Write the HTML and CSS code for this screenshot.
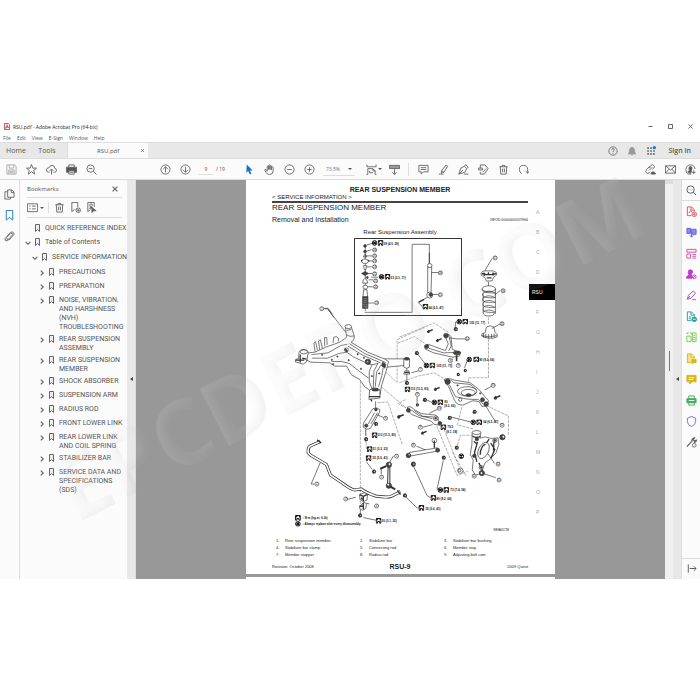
FILE: index.html
```
<!DOCTYPE html>
<html lang="en">
<head>
<meta charset="utf-8">
<title>RSU.pdf - Adobe Acrobat Pro (64-bit)</title>
<link rel="stylesheet" href="styles.css">
</head>
<body>
<svg class="defs" aria-hidden="true">
  <defs>
    <symbol id="bm" viewBox="0 0 10 16"><path d="M1 1h8v14L5 11 1 15z"/></symbol>
    <symbol id="right" viewBox="0 0 10 10"><path d="M3 1l4 4-4 4"/></symbol>
    <symbol id="down" viewBox="0 0 10 10"><path d="M1 3l4 4 4-4"/></symbol>
    <symbol id="x" viewBox="0 0 10 10"><path d="M1 1l8 8M9 1L1 9"/></symbol>
    <symbol id="trash" viewBox="0 0 24 24"><path d="M3 6h18M9 6V3h6v3M5 6l1 16h12l1-16M10 10v8M14 10v8"/></symbol>
    <symbol id="t" viewBox="0 0 18 18"><path d="M2 16V2h14v14h-4v-5H6v5z" fill="#fff" stroke="#111" stroke-width="3"/><path d="M2 2h5v5H2zM12 2h4v5h-4z" fill="#111"/></symbol>
    <symbol id="r" viewBox="0 0 18 18"><circle cx="9" cy="9" r="7" fill="#fff" stroke="#111" stroke-width="3"/><path d="M5 5l8 8M13 5l-8 8" stroke="#111" stroke-width="4"/></symbol>
    <symbol id="nut" viewBox="0 0 14 14"><path d="M3 2l6-1 4 5-2 6-7 1-3-5z" fill="#333"/><circle cx="8" cy="7" r="2" fill="#bbb"/></symbol>
    <symbol id="bolt" viewBox="0 0 20 14"><path d="M1 8l5-5 4 3-1 6-5 1z" fill="#333"/><path d="M8 7l10-4" stroke="#333" stroke-width="4"/></symbol>
    <filter id="emboss" x="-5%" y="-20%" width="110%" height="140%">
      <feGaussianBlur in="SourceAlpha" stdDeviation="4" result="b"/>
      <feOffset in="b" dx="-5" dy="-3" result="lo"/>
      <feComposite in="SourceAlpha" in2="lo" operator="out" result="lo2"/>
      <feColorMatrix in="lo2" values="0 0 0 0 0  0 0 0 0 0  0 0 0 0 0  0 0 0 .07 0" result="shade"/>
      <feOffset in="b" dx="5" dy="3" result="hi"/>
      <feComposite in="SourceAlpha" in2="hi" operator="out" result="hi2"/>
      <feColorMatrix in="hi2" values="0 0 0 0 1  0 0 0 0 1  0 0 0 0 1  0 0 0 .08 0" result="light"/>
      <feColorMatrix in="SourceAlpha" values="0 0 0 0 .65  0 0 0 0 .65  0 0 0 0 .65  0 0 0 .06 0" result="base"/>
      <feMerge><feMergeNode in="base"/><feMergeNode in="light"/><feMergeNode in="shade"/></feMerge>
    </filter>
  </defs>
</svg>
<div class="app">
  <header class="titlebar">
    <svg class="pdf" viewBox="0 0 14 16"><path d="M1 1h9l3 3v11H1z" fill="#fff" stroke="#c33" stroke-width="2"/><path d="M3 12c3-2 4-5 4-8 0 4 2 6 4 6-3-1-6 0-8 2" stroke="#c33" fill="none" stroke-width="2"/></svg>
    <h1>RSU.pdf - Adobe Acrobat Pro (64-bit)</h1>
    <div class="winbtns">
      <button aria-label="Minimize"><svg viewBox="0 0 10 10"><path d="M1 5h8"/></svg></button>
      <button aria-label="Maximize"><svg viewBox="0 0 10 10"><path d="M1 1h8v8H1z"/></svg></button>
      <button aria-label="Close"><svg viewBox="0 0 10 10"><use href="#x"/></svg></button>
    </div>
  </header>
  <nav class="menubar"><button>File</button><button>Edit</button><button>View</button><button>E-Sign</button><button>Window</button><button>Help</button></nav>
  <div class="tabs">
    <button class="home">Home</button><button class="tools">Tools</button>
    <div class="tab"><span>RSU.pdf</span><button aria-label="Close tab"><svg viewBox="0 0 10 10"><use href="#x"/></svg></button></div>
    <div class="account">
      <button aria-label="Help"><svg viewBox="0 0 24 24"><circle cx="12" cy="12" r="10"/><path d="M9 9q0-3 3-3t3 3q0 2-3 4v2M12 17v2"/></svg></button>
      <button aria-label="Notifications"><svg viewBox="0 0 24 24"><path d="M3 19q3-3 3-9 0-6 6-7 6 1 6 7 0 6 3 9zM9 21h6" fill="#999" stroke="#999"/></svg></button>
      <button aria-label="Apps"><svg viewBox="0 0 24 24"><path d="M3 5h4M10 5h4M3 12h4M10 12h4M17 12h4M3 19h4M10 19h4M17 19h4" stroke-width="4"/><circle cx="20" cy="4" r="4" fill="#1877e0" stroke="none"/></svg></button>
      <button class="signin">Sign In</button>
    </div>
  </div>
  <div class="toolbar">
    <div class="group g-file">
      <button aria-label="Save"><svg class="dim" viewBox="0 0 24 24"><path d="M2 2h17l3 3v17H2zM7 2v7h10V2M6 22v-9h12v9M8 16h8M8 19h8"/></svg></button>
      <button aria-label="Star"><svg viewBox="0 0 24 24"><path d="M12 1l3 8h8l-6 5 2 8-7-5-7 5 2-8-6-5h8z"/></svg></button>
      <button aria-label="Upload"><svg viewBox="0 0 24 24"><path d="M8 18H6q-5 0-5-5t6-5q1-5 6-5 6 0 6 6 4 1 4 5t-5 4h-2M12 23V11M8 15l4-4 4 4"/></svg></button>
      <button aria-label="Print"><svg viewBox="0 0 24 24"><path d="M6 7V2h12v5M6 15h12v7H6z"/><path d="M1 7h22v11h-5v-4H6v4H1z" fill="#555"/><path d="M8 18h8"/></svg></button>
      <button aria-label="Find"><svg viewBox="0 0 24 24"><circle cx="10" cy="10" r="8"/><path d="M16 16l7 7M6 10h8"/></svg></button>
    </div>
    <div class="group g-nav">
      <button aria-label="Previous page"><svg viewBox="0 0 24 24"><circle cx="12" cy="12" r="10"/><path d="M12 18V6M7 11l5-5 5 5"/></svg></button>
      <button aria-label="Next page"><svg viewBox="0 0 24 24"><circle cx="12" cy="12" r="10"/><path d="M12 6v12M7 13l5 5 5-5"/></svg></button>
      <input class="pageno" aria-label="Page" value="9"><span class="total">/ 19</span>
    </div>
    <div class="group g-view">
      <button aria-label="Select"><svg viewBox="0 0 24 24"><path d="M6 1l13 13h-6l3 7-3 2-4-8-4 4z" fill="#1473c8" stroke="none"/></svg></button>
      <button aria-label="Pan"><svg viewBox="0 0 24 24"><path d="M7 16V5q2-2 3 0v7V3q2-2 3 0v9V4q2-2 3 0v9V7q2-2 4 0v8q0 8-8 8-5 0-7-4l-4-6q1-2 3-1l3 4"/></svg></button>
      <button aria-label="Zoom out"><svg viewBox="0 0 24 24"><circle cx="12" cy="12" r="10"/><path d="M7 12h10"/></svg></button>
      <button aria-label="Zoom in"><svg viewBox="0 0 24 24"><circle cx="12" cy="12" r="10"/><path d="M7 12h10M12 7v10"/></svg></button>
      <div class="zoom"><select aria-label="Zoom level"><option>73,5%</option></select><i class="caret"></i></div>
      <button class="fit" aria-label="Fit"><svg viewBox="0 0 24 24"><path d="M2 1v5h20V1M4 23V10h11l5 5v8M15 10v5h5M1 23h3M20 23h3M8 15v4h7"/></svg><i class="caret"></i></button>
      <button aria-label="Scroll"><svg viewBox="0 0 24 24"><path d="M1 3h22v7H1z" fill="#999"/><path d="M12 10v13M7 18l5 5 5-5"/></svg></button>
    </div>
    <div class="group g-edit">
      <button aria-label="Comment"><svg viewBox="0 0 24 24"><path d="M2 3h20v14H12l-5 5v-5H2zM6 8h12M6 12h12"/></svg></button>
      <button aria-label="Highlight"><svg viewBox="0 0 24 24"><path d="M18 2l3 3-8 13-6 2 1-6zM8 14l5 4M2 22h10"/></svg></button>
      <button aria-label="Sign"><svg viewBox="0 0 24 24"><path d="M2 22L6 9l8-4 5 5-4 8zM2 22l9-9M14 5l3-4 5 6-3 3M13 22h10"/></svg></button>
      <button aria-label="Stamp"><svg viewBox="0 0 24 24"><path d="M5 9V2h10l7 8-8 12H5v-5M1 9h9v4H1zM10 18l8-8"/></svg></button>
      <button aria-label="Delete"><svg viewBox="0 0 24 24"><use href="#trash"/></svg></button>
      <button aria-label="Rotate"><svg viewBox="0 0 24 24"><path d="M8 21Q3 18 3 12q0-9 9-9t9 9v8M17 16l4 4 3-4"/></svg></button>
    </div>
    <div class="group g-share">
      <button aria-label="Link"><svg viewBox="0 0 24 24"><path d="M9 14l7-7M8 9l5-6q3-3 6 0t0 6l-3 3M12 8L9 6 3 13q-3 3 0 6t6 0l2-2"/><path d="M13 22q0-4 4-5 5 0 6 5z" fill="#555"/></svg></button>
      <button aria-label="Mail"><svg viewBox="0 0 24 24"><path d="M1 4h22v16H1zM1 4l11 9L23 4M1 20l8-9M23 20l-8-9"/></svg></button>
      <button aria-label="Add person"><svg viewBox="0 0 24 24"><path d="M14 22Q2 24 2 12 3 2 12 2t10 9M19 14v8M15 18h8"/><path d="M9 7q3-3 6 0 1 4-1 7v3l-2 3q-4 0-6-3l4-3q-2-3-1-7" fill="#555"/></svg></button>
    </div>
  </div>
  <div class="body">
    <nav class="rail">
      <button aria-label="Page thumbnails"><svg viewBox="0 0 24 24"><path d="M8 2h9l5 5v11H8zM16 2v6h6M8 6H2v16h12v-4"/></svg></button>
      <button class="on" aria-label="Bookmarks"><svg viewBox="0 0 24 24"><path d="M5 1h14v21l-7-6-7 6z"/></svg></button>
      <button aria-label="Attachments"><svg viewBox="0 0 24 24"><path d="M6 14l9-9q4-1 4 3l-9 10q-5 2-4-3M10 18l-2 3q-6 2-6-4L14 3q7-3 8 4L11 20"/></svg></button>
    </nav>
    <aside class="panel">
      <div class="phead"><h2>Bookmarks</h2><button aria-label="Close panel"><svg viewBox="0 0 10 10"><use href="#x"/></svg></button></div>
      <div class="ptools">
        <button class="opts" aria-label="Options"><svg viewBox="0 0 24 24"><path d="M1 4h22v17H1zM5 9h3M5 15h3M11 9h8M11 15h8"/></svg><i class="caret"></i></button>
        <button aria-label="Delete bookmark"><svg viewBox="0 0 24 24"><use href="#trash"/></svg></button>
        <button aria-label="New bookmark"><svg viewBox="0 0 24 24"><path d="M10 16l-6 5V1h13v10"/><circle cx="18" cy="18" r="5"/><path d="M18 15v6M15 18h6"/></svg></button>
        <button aria-label="Find bookmark"><svg viewBox="0 0 24 24"><path d="M10 16l-6 5V1h14v10"/><circle cx="11" cy="7" r="3"/><path d="M7 14q4-5 8 0M13 12l9 7h-5l-4 4z" fill="#555"/></svg></button>
      </div>
      <ul class="tree">
        <li><div class="row"><i class="tw"></i><svg class="b"><use href="#bm"/></svg><a href="#p">QUICK REFERENCE INDEX</a></div></li>
        <li><div class="row"><svg class="tw"><use href="#down"/></svg><svg class="b"><use href="#bm"/></svg><a href="#p">Table of Contents</a></div>
          <ul>
            <li><div class="row"><svg class="tw"><use href="#down"/></svg><svg class="b"><use href="#bm"/></svg><a href="#p">SERVICE INFORMATION</a></div>
              <ul>
                <li><div class="row"><svg class="tw"><use href="#right"/></svg><svg class="b"><use href="#bm"/></svg><a href="#p">PRECAUTIONS</a></div></li>
                <li><div class="row"><svg class="tw"><use href="#right"/></svg><svg class="b"><use href="#bm"/></svg><a href="#p">PREPARATION</a></div></li>
                <li><div class="row"><svg class="tw"><use href="#right"/></svg><svg class="b"><use href="#bm"/></svg><a href="#p">NOISE, VIBRATION,<br>AND HARSHNESS<br>(NVH)<br>TROUBLESHOOTING</a></div></li>
                <li><div class="row"><svg class="tw"><use href="#right"/></svg><svg class="b"><use href="#bm"/></svg><a href="#p">REAR SUSPENSION<br>ASSEMBLY</a></div></li>
                <li><div class="row"><svg class="tw"><use href="#right"/></svg><svg class="b"><use href="#bm"/></svg><a href="#p">REAR SUSPENSION<br>MEMBER</a></div></li>
                <li><div class="row"><svg class="tw"><use href="#right"/></svg><svg class="b"><use href="#bm"/></svg><a href="#p">SHOCK ABSORBER</a></div></li>
                <li><div class="row"><svg class="tw"><use href="#right"/></svg><svg class="b"><use href="#bm"/></svg><a href="#p">SUSPENSION ARM</a></div></li>
                <li><div class="row"><svg class="tw"><use href="#right"/></svg><svg class="b"><use href="#bm"/></svg><a href="#p">RADIUS ROD</a></div></li>
                <li><div class="row"><svg class="tw"><use href="#right"/></svg><svg class="b"><use href="#bm"/></svg><a href="#p">FRONT LOWER LINK</a></div></li>
                <li><div class="row"><svg class="tw"><use href="#right"/></svg><svg class="b"><use href="#bm"/></svg><a href="#p">REAR LOWER LINK<br>AND COIL SPRING</a></div></li>
                <li><div class="row"><svg class="tw"><use href="#right"/></svg><svg class="b"><use href="#bm"/></svg><a href="#p">STABILIZER BAR</a></div></li>
                <li><div class="row"><svg class="tw"><use href="#right"/></svg><svg class="b"><use href="#bm"/></svg><a href="#p">SERVICE DATA AND<br>SPECIFICATIONS<br>(SDS)</a></div></li>
              </ul>
            </li>
          </ul>
        </li>
      </ul>
    </aside>
    <button class="collapse" aria-label="Collapse left panel"><i></i></button>
    <main class="doc">
      <article class="paper" id="p">
        <div class="content">
          <h2 class="running">REAR SUSPENSION MEMBER</h2>
          <p class="service">&lt; SERVICE INFORMATION &gt;</p>
          <h3>REAR SUSPENSION MEMBER</h3>
          <div class="sub"><h4>Removal and Installation</h4><span>INFOID:0000000001679964</span></div>
          <p class="caption">Rear Suspension Assembly</p>
          <svg class="diagram" viewBox="272 237 257 299" role="img" aria-label="Rear suspension exploded view">
            <rect x="355" y="239" width="107" height="77" fill="none" stroke="#333" stroke-width="1" shape-rendering="crispEdges"/>
            <!-- strut mount stack -->
            <g transform="translate(245 178) scale(.3333)" class="ln">
              <path d="M362 200V400M361 203l22-7M361 221l20-6M361 234h22M368 249h16M362 267h20M372 287h12M372 306h14M368 327h18M370 376h20M380 298l20 0M360 404h143V200M250 394l18 26M236 392h14l12 16"/>
              <circle cx="361" cy="204" r="4" class="k"/><circle cx="361" cy="221" r="4" class="k"/><path d="M356 237l5-8 6 8z"/>
              <ellipse cx="361" cy="250" rx="10" ry="7" class="w"/><path d="M352 246l-2 5M371 246l2 5" stroke-width="4"/>
              <path d="M357 263h9l-2 12h-5z" class="w"/><path d="M351 287l10-6 11 6-11 6z" class="k"/>
              <path d="M354 316q0-13 7-14 8 2 8 14z" class="w"/><ellipse cx="362" cy="328" rx="7" ry="6" class="w"/><path d="M357 336h10l2 22h-14z" class="w"/>
              <path d="M354 357h16v35h-16z" class="k"/><path d="M356 363h12M356 369h12M356 375h12M356 381h12M356 387h12" stroke="#999"/>
              <circle cx="368" cy="299" r="3" class="k"/>
            </g>
            <!-- shock absorber, coil spring -->
            <g transform="translate(400 178) scale(.3333)" class="ln">
              <path d="M38 199h52v60"/><path d="M90 226v32" stroke-width="4" stroke-dasharray="4 2"/>
              <path d="M85 267h12l-2 78h-10z" class="w"/><ellipse cx="91" cy="263" rx="7" ry="6" class="w"/><circle cx="91" cy="352" r="9" class="w"/><circle cx="94" cy="351" r="5" class="k"/>
              <path d="M97 284h20M100 350h17M84 359l-26 14M56 374l14 14"/><path d="M58 373l16-8" stroke-width="4"/>
              <path d="M246 292q-3-11 12-13h24q14 4 11 12l-10 8-4 10-17 1-5-11z" class="w"/><path d="M248 287q22 7 43 0M254 284l2 10M268 283v9M281 284l2 9M263 300h14" stroke-width="4"/>
              <path d="M268 312v12M279 241l-22 38M304 338l-18 14"/>
              <ellipse cx="269" cy="333" rx="20" ry="9"/><path d="M249 333q-3 11 20 12t20 1M250 348q-3 12 19 12t20 0M251 362q-3 12 18 12t19 0M251 377q-3 11 18 12t18 0M252 392q-3 11 17 12t17 0M252 405q1 10 17 10t17-10M289 333v75M252 346v60M252 346q16-12 37 0M252 360q16-12 37 0M252 374q16-12 37 0M252 389q16-12 36 0M252 403q16-12 36 0"/>
            </g>
            <!-- subframe and front brace -->
            <g transform="translate(285 300) scale(.3333)" class="ln">
              <path d="M118 27h10l56 72"/>
              <path d="M227 150V630M300 215l38 34V120l82-36M290 262l75 64-25-13 25-13M340 131l50-20 30 20M279 310l31-2 44 130" class="dash"/>
              <path d="M295 178L360 178V198L306 203z" class="w"/>
              <path d="M120 140l-1-26h7l1 22M91 158l-4-28 5-4 6 26M105 152l-4-28 6-3 6 26M145 130l2-17q8-5 14 3v10" class="w"/>
              <path d="M68 160L90 158 125 142 165 128 186 113 182 84Q190 74 200 82L209 110Q211 122 199 128L249 158 299 178 312 186 305 214 290 262 287 286 257 284 255 272 240 262 225 240 200 226 186 200 150 200 135 190 78 188 66 182z" class="w"/>
              <path d="M42 160q2-11 17-10 12 2 11 11l-6 27q-8 10-20 3l-13-4 2-8 8-1z" class="w"/><ellipse cx="57" cy="157" rx="11" ry="6" class="w"/><path d="M46 165v24M52 176l12 3M32 182h26" stroke-width="4"/>
              <ellipse cx="191" cy="81" rx="10" ry="6" class="w"/><path d="M186 92l14-2M186 106q10 7 22 3"/>
              <path d="M80 165L130 160 168 138 188 134M194 132L240 162 292 184 304 190M190 140L236 168 288 190M82 176L128 176 162 162 186 158 206 172 244 190 262 196 280 192"/>
              <path d="M140 186L170 186 194 192 222 214 252 236M262 196L254 216 254 246 262 268M280 192L268 214 266 268M290 196L276 218 272 262M296 204l-4 24-10 34"/>
              <path d="M180 147l8 9M243 181l12 12" stroke-width="6"/><circle cx="185" cy="151" r="6"/><circle cx="250" cy="187" r="8" class="k"/><circle cx="249" cy="187" r="3" fill="#fff"/>
              <g class="k"><circle cx="141" cy="181" r="2"/><circle cx="158" cy="171" r="2"/><circle cx="192" cy="182" r="2"/><circle cx="229" cy="208" r="2"/><circle cx="219" cy="164" r="2"/><circle cx="238" cy="175" r="2"/><circle cx="145" cy="194" r="2"/><circle cx="112" cy="166" r="2"/><circle cx="284" cy="222" r="2"/><circle cx="262" cy="230" r="2"/></g>
              <path d="M358 178q8-8 17 0v25q-9 7-17 0z" class="w"/><ellipse cx="367" cy="178" rx="8" ry="4" class="k"/><path d="M294 188l10 6-3 12-10-7z" class="k"/>
              <path d="M255 272q15-13 31 0v24l-33 4z" class="w"/><ellipse cx="272" cy="271" rx="11" ry="4" class="k"/><path d="M253 292h34M258 299l4 7" stroke-width="4"/>
              <path d="M367 206v44"/><path d="M358 224h18l-3-10h-12z" class="w"/><path d="M360 219h15" stroke-width="4"/>
              <path d="M273 306v22M243 390v20"/>
              <path d="M265 328q12-6 21 3l-2 10-27 47q-11 6-21-4v-12z" class="w"/><path d="M270 340l-19 34M279 340l-20 34"/><circle cx="274" cy="331" r="4" class="k"/><circle cx="245" cy="379" r="5" class="k"/><path d="M276 346l24 10"/>
            </g>
            <!-- upper arm, lower arm, links -->
            <g transform="translate(400 310) scale(.3333)" class="ln">
              <path d="M268 23v20M268 88v117h-60v40" class="dash"/>
              <path d="M247 79q-2-8 11-10l4-17q12-7 22 0l4 17q10 4 6 13-22 10-47-3z" class="w"/><path d="M249 78q20 8 44 0M253 72v12M260 73v12M268 74v12M277 73v12M285 72v12"/>
              <path d="M0 82l105-42 42 28M0 220l55-20 50-10 40 25M252 284l76 36v60M188 293l-14 54 48 12M167 120l-13 55" class="dash"/>
              <path d="M76 108l10-4 52 19 9-20-9-22q7-14 17 0l4 38q14 9 24 8l-2 12-20 4-36-8-22-5-26-12z" class="w"/><circle cx="82" cy="111" r="6" class="k"/><circle cx="140" cy="78" r="7" class="k"/><ellipse cx="173" cy="130" rx="11" ry="6" class="k"/><path d="M172 137v18" stroke-width="5"/><path d="M88 116l45 14 28-1M148 77l8 32-8 15"/>
              <path d="M134 211q8-8 31 1l48 8 25 19 30 35-6 16-14 1-8-14-19-3-29 13q-20 1-26-14l-18-41z" class="w"/><ellipse cx="204" cy="246" rx="29" ry="14" class="w"/><ellipse cx="207" cy="250" rx="21" ry="10"/><ellipse cx="208" cy="257" rx="8" ry="4" class="k"/><circle cx="145" cy="217" r="8" class="k"/><path d="M155 212l8 8 50 5 20 17M150 226l19 36 33 7 36 2 15 14"/><circle cx="250" cy="271" r="6" class="k"/><circle cx="261" cy="284" r="7" class="k"/><circle cx="262" cy="283" r="2" fill="#fff"/><circle cx="183" cy="271" r="5"/><circle cx="243" cy="252" r="2" class="k"/><circle cx="175" cy="228" r="2" class="k"/>
              <path d="M24 293q10-5 21 8l21 12 40 4q15 5 10 18l12 5-6 8-18-3-8-9-38-12-22-9-12-14z" class="w"/><path d="M35 302l24 17 40 9M45 304l25 17 31 2"/><circle cx="27" cy="303" r="6" class="k"/><circle cx="109" cy="327" r="7" class="w"/><circle cx="109" cy="327" r="3" class="k"/><circle cx="121" cy="342" r="5" class="k"/>
              <path d="M175 37h-6v16M205 88h-30l-25-3M205 150l-9 25M80 166l-25-32M284 227l-28 15M97 279l-18-9M214 338l-60-15M290 339l-32-52M53 262v18M63 182l-27 8M306 41l-28 16M120 297l-30 15M70 354l30-8"/>
              <!-- knuckle -->
              <path d="M219 369q14-8 26 1l-3 17 17-4 17 5 21-2 2 20-8 25-19 20-14 10-14 33-15 4-10-15 3-30-9-17 5-30z" class="w"/><ellipse cx="232" cy="370" rx="13" ry="6" class="w"/><path d="M220 381q12 7 24 0" stroke-width="4"/><ellipse cx="253" cy="424" rx="15" ry="26" transform="rotate(25 253 424)" class="w"/><path d="M243 437q1-26 16-32M235 398l-9 32 7 28M275 402l12 19-12 27M224 396l10 9M239 461l11 23M285 390l-2 34M270 390l-8 11" stroke-width="4"/><circle cx="287" cy="394" r="6" class="w"/><circle cx="287" cy="394" r="3" class="k"/><circle cx="233" cy="390" r="5" class="k"/><circle cx="246" cy="475" r="6" class="w"/><circle cx="246" cy="475" r="3" class="k"/><circle cx="225" cy="440" r="5" class="k"/>
              <circle cx="310" cy="384" r="8" class="k"/><circle cx="313" cy="383" r="4" fill="#fff"/>
              <circle cx="183" cy="485" r="8" class="w"/><circle cx="181" cy="484" r="4"/><circle cx="248" cy="492" r="8" class="k"/><circle cx="247" cy="492" r="4" fill="#fff"/>
              <path d="M222 378h-38l-12 35M112 350l62 150 32-14M130 350l50 125M160 430l40 70" class="dash"/>
              <path d="M286 463l-20-30M290 506l-36-12"/>
            </g>
            <!-- stabilizer bar, connecting rod, radius rod -->
            <g transform="translate(285 430) scale(.3333)" class="ln">
              <path d="M106 37l-31 14q-7 6-5 20l10 9 45 26 12 32 50 34q20 14 28 10l15-2q15 12 43 21 35 6 47 1l28-14" stroke="#222" stroke-width="9" stroke-linejoin="round"/>
              <path d="M106 37l-31 14q-7 6-5 20l10 9 45 26 12 32 50 34q20 14 28 10l15-2q15 12 43 21 35 6 47 1l28-14" class="core"/>
              <path d="M97 32l12 9M339 184l9 13" stroke-width="4"/>
              <path d="M106 101L79 165h10M189 211l24-6M236 266l38 8M362 202l36 35h15M245 98l18 23M290 135v-16M327 80l-12 20M385 106l43 94 10 6M477 94l-19 87h12M396 51l34 14M227 240v15"/>
              <path d="M311 108l-2 58M316 108v59" stroke-width="3"/><circle cx="313" cy="107" r="8" class="k"/><circle cx="315" cy="105" r="4" fill="#fff"/><circle cx="313" cy="170" r="8" class="k"/><circle cx="311" cy="167" r="4" fill="#fff"/><path d="M305 111l-18 8M318 173l14 8" stroke-width="6"/>
              <path d="M225 197l15-6 9 5-2 17-10 5-11-6z" class="w"/><path d="M225 197l11 5v15M236 202l12-6M230 206l3 6" stroke-width="4"/>
              <path d="M229 229l8-9 9 4-3 15-10 5-9-6zM246 223l8 2" class="w"/><path d="M224 232h13M236 222v20" stroke-width="4"/>
              <path d="M375 70l84-14v10l-84 15z" class="w"/><circle cx="372" cy="79" r="7" class="k"/><circle cx="460" cy="63" r="6" class="k"/><circle cx="374" cy="77" r="3" fill="#fff"/><circle cx="450" cy="34" r="7" class="w"/><path d="M450 34v22" stroke-width="4"/>
              <path d="M244 0v40M260 58h-15V35" class="dash"/>
            </g>
            <g class="nuts">
              <use href="#nut" x="454" y="327" width="5" height="5"/><use href="#nut" x="415" y="351" width="5" height="5"/><use href="#nut" x="464" y="369" width="4" height="4"/><use href="#nut" x="457" y="373" width="4" height="4"/><use href="#nut" x="405" y="381" width="5" height="5"/><use href="#nut" x="423" y="398" width="5" height="5"/><use href="#nut" x="416" y="403" width="4" height="5"/><use href="#nut" x="448" y="416" width="5" height="5"/><use href="#nut" x="473" y="410" width="5" height="5"/><use href="#nut" x="374" y="422" width="5" height="5"/><use href="#nut" x="372" y="470" width="5" height="5"/><use href="#nut" x="403" y="494" width="5" height="5"/><use href="#nut" x="442" y="456" width="5" height="5"/><use href="#nut" x="358" y="514" width="5" height="5"/><use href="#nut" x="411" y="462" width="6" height="6"/><use href="#nut" x="364" y="437" width="5" height="6"/><use href="#nut" x="455" y="446" width="5" height="5"/>
              <use href="#bolt" x="427" y="329" width="7" height="5"/><use href="#bolt" x="436" y="338" width="7" height="5"/><use href="#bolt" x="434" y="387" width="7" height="5"/><use href="#bolt" x="397" y="414" width="8" height="6"/><use href="#bolt" x="421" y="431" width="7" height="5"/><use href="#bolt" x="494" y="395" width="8" height="6"/>
            </g>
            <g class="marks">
              <use href="#r" x="372" y="240" width="6" height="6"/><use href="#t" x="378" y="240" width="6" height="6"/><text x="384" y="245">39 (4.0, 29)</text>
              <use href="#r" x="379" y="274" width="6" height="6"/><use href="#t" x="385" y="274" width="6" height="6"/><text x="391" y="279">23 (2.3, 17)</text>
              <use href="#t" x="423" y="304" width="6" height="6"/><text x="429" y="309">64 (6.5, 47)</text>
              <use href="#r" x="457" y="319" width="6" height="6"/><use href="#t" x="463" y="319" width="6" height="6"/><text x="470" y="324">105 (11, 77)</text>
              <use href="#r" x="424" y="363" width="6" height="6"/><use href="#t" x="430" y="363" width="6" height="6"/><text x="437" y="368">105 (11, 77)</text>
              <use href="#r" x="467" y="357" width="6" height="6"/><use href="#t" x="474" y="357" width="6" height="6"/><text x="480" y="361">90 (9.2, 66)</text>
              <use href="#t" x="405" y="387" width="6" height="6"/><text x="411" y="391">113 (11.5, 83)</text>
              <use href="#r" x="432" y="400" width="6" height="6"/><use href="#t" x="438" y="400" width="6" height="6"/><text x="445" y="404">90</text><text x="445" y="408">(9.2, 66)</text>
              <use href="#r" x="471" y="420" width="6" height="6"/><use href="#t" x="477" y="420" width="6" height="6"/><text x="484" y="424">64 (6.5, 47)</text>
              <use href="#t" x="441" y="425" width="6" height="6"/><text x="448" y="429">79.5</text><text x="447" y="434">(8.1, 59)</text>
              <use href="#t" x="372" y="433" width="6" height="6"/><text x="378" y="437">113 (11.5, 83)</text>
              <use href="#t" x="367" y="447" width="6" height="6"/><text x="373" y="451">31 (3.2, 23)</text>
              <use href="#t" x="366" y="456" width="6" height="6"/><text x="373" y="460">55 (5.6, 41)</text>
              <use href="#r" x="438" y="488" width="6" height="6"/><use href="#t" x="444" y="488" width="6" height="6"/><text x="451" y="492">73 (7.4, 54)</text>
              <use href="#t" x="431" y="496" width="6" height="6"/><text x="437" y="501">90 (9.2, 66)</text>
              <use href="#t" x="419" y="506" width="6" height="6"/><text x="426" y="511">55 (5.6, 41)</text>
              <use href="#t" x="376" y="519" width="6" height="6"/><text x="382" y="523">30 (3.1, 22)</text>
              <use href="#r" x="459" y="454" width="6" height="6"/>
              <use href="#t" x="295" y="516" width="6" height="6"/><text x="303" y="520">: N·m (kg-m, ft-lb)</text>
              <use href="#r" x="295" y="522" width="6" height="6"/><text x="303" y="526">: Always replace after every disassembly.</text>
              <text x="494" y="532" class="thin">WEIA0171E</text>
            </g>
            <g class="nums">
              <circle cx="322" cy="309" r="2"/><text x="322" y="310">1</text><circle cx="317" cy="485" r="2"/><text x="317" y="486">2</text><circle cx="346" cy="500" r="2"/><text x="346" y="501">3</text><circle cx="377" cy="507" r="2"/><text x="377" y="508">4</text><circle cx="382" cy="478" r="2"/><text x="382" y="479">5</text><circle cx="397" cy="457" r="2"/><text x="397" y="458">5</text><circle cx="386" cy="419" r="2"/><text x="386" y="420">6</text><circle cx="421" cy="370" r="2"/><text x="421" y="371">7</text><circle cx="414" cy="446" r="2"/><text x="414" y="447">8</text><circle cx="418" cy="395" r="2"/><text x="418" y="396">9</text><circle cx="451" cy="361" r="2"/><text x="451" y="362">9</text><circle cx="459" cy="366" r="2"/><text x="459" y="367">9</text><circle cx="421" cy="428" r="2"/><text x="421" y="429">9</text>
              <circle cx="440" cy="409" r="2"/><text x="440" y="410">10</text><circle cx="499" cy="465" r="2"/><text x="499" y="466">12</text><circle cx="500" cy="481" r="2"/><text x="500" y="482">11</text><circle cx="475" cy="477" r="2"/><text x="475" y="478">11</text><circle cx="494" cy="386" r="2"/><text x="494" y="387">13</text><circle cx="468" cy="339" r="2"/><text x="468" y="340">14</text><circle cx="503" cy="426" r="2"/><text x="503" y="427">11</text><circle cx="503" cy="324" r="2"/><text x="503" y="325">15</text><circle cx="504" cy="291" r="2"/><text x="504" y="292">16</text><circle cx="496" cy="258" r="2"/><text x="496" y="259">17</text><circle cx="441" cy="273" r="2"/><text x="441" y="274">18</text><circle cx="441" cy="295" r="2"/><text x="441" y="296">11</text><circle cx="377" cy="303" r="2"/><text x="377" y="304">19</text><circle cx="376" cy="287" r="2"/><text x="376" y="288">20</text><circle cx="376" cy="281" r="2"/><text x="376" y="282">21</text><circle cx="375" cy="274" r="2"/><text x="375" y="275">22</text><circle cx="375" cy="267" r="2"/><text x="375" y="268">23</text><circle cx="375" cy="261" r="2"/><text x="375" y="262">24</text><circle cx="375" cy="256" r="2"/><text x="375" y="257">25</text><circle cx="375" cy="250" r="2"/><text x="375" y="251">26</text>
            </g>
          </svg>
          <ol class="parts">
            <li><span>1.</span>Rear suspension member</li><li><span>2.</span>Stabilizer bar</li><li><span>3.</span>Stabilizer bar bushing</li>
            <li><span>4.</span>Stabilizer bar clamp</li><li><span>5.</span>Connecting rod</li><li><span>6.</span>Member stay</li>
            <li><span>7.</span>Member stopper</li><li><span>8.</span>Radius rod</li><li><span>9.</span>Adjusting bolt cam</li>
          </ol>
          <footer><span>Revision: October 2008</span><strong>RSU-9</strong><span class="end">2009 Quest</span></footer>
        </div>
        <ul class="index"><li>A</li><li>B</li><li>C</li><li>D</li><li class="cur">RSU</li><li>F</li><li>G</li><li>H</li><li>I</li><li>J</li><li>K</li><li>L</li><li>M</li><li>N</li><li>O</li><li>P</li></ul>
      </article>
      <div class="next"></div>
    </main>
    <div class="scroll"><i></i></div>
    <button class="collapse" aria-label="Collapse right panel"><i></i></button>
    <nav class="side">
      <button class="first" aria-label="Search tools"><svg viewBox="0 0 24 24"><g stroke="#555"><circle cx="10" cy="10" r="8"/><path d="M16 16l6 6M6 10h1M10 10h1M14 10h1"/></g></svg></button>
      <button aria-label="Create PDF"><svg viewBox="0 0 24 24"><g stroke="#e0525c"><path d="M12 21H3V2h9l6 6v4M11 2v7h7M6 16l4-6 3 4"/><circle cx="18" cy="18" r="5"/><path d="M18 15v6M15 18h6"/></g></svg></button>
      <button aria-label="Combine files"><svg viewBox="0 0 24 24"><g stroke="#6060e0"><path d="M2 3h8v11H2zM11 5h11v11h-8z" fill="#8b8bea"/><path d="M12 10v12M8 18l4 4 4-4"/></g></svg></button>
      <button aria-label="Organize pages"><svg viewBox="0 0 24 24"><g stroke="#d6479c"><path d="M2 3h20v6H2zM2 13h8v9H2zM14 14h8M14 18h8M14 22h8"/></g></svg></button>
      <button aria-label="Request signatures"><svg viewBox="0 0 24 24"><g stroke="#c038cc"><path d="M6 3q5-3 8 1 1 5-3 8l2 2v6H1q0-6 6-6-4-6-1-11z" fill="#c038cc"/><circle cx="18" cy="17" r="4" fill="#fff"/><path d="M15 20l6-6"/></g></svg></button>
      <button aria-label="Fill and sign"><svg viewBox="0 0 24 24"><g stroke="#9050d0"><path d="M3 20l2-8L16 2l5 5-10 11zM3 20l6-7M14 21h8"/></g></svg></button>
      <button aria-label="Export PDF"><svg viewBox="0 0 24 24"><g stroke="#2a9a9c"><path d="M12 21H3V2h9l6 6v4M11 2v7h7M6 13h6M6 17h5"/><circle cx="18" cy="18" r="5" fill="#2a9a9c"/><path d="M15 18h6" stroke="#fff"/></g></svg></button>
      <button aria-label="Compress"><svg viewBox="0 0 24 24"><g stroke="#78c94c"><path d="M2 9v12h9V9zM2 5V2h4M9 2h3v4M14 2h8v19h-8zM16 7h4M16 12h4M16 17h4"/></g></svg></button>
      <button aria-label="Edit PDF"><svg viewBox="0 0 24 24"><g stroke="#d6b619"><path d="M12 21H3V2h9l6 6v4M11 2v7h7" fill="#f3e289"/><path d="M13 14h9v7h-5l-4 2z" fill="#d6b619"/></g></svg></button>
      <button aria-label="Comment"><svg viewBox="0 0 24 24"><g stroke="#d6b619"><path d="M2 3h20v14h-9l-5 5v-5H2z" fill="#d6b619"/><path d="M6 8h12M6 12h10" stroke="#fff"/></g></svg></button>
      <button aria-label="Print production"><svg viewBox="0 0 24 24"><g stroke="#45ac5b"><path d="M6 8V2h12v6M6 16v6h12v-6z"/><path d="M2 8h20v9H2z" fill="#45ac5b"/><path d="M6 12h12" stroke="#fff"/></g></svg></button>
      <button aria-label="Protect"><svg viewBox="0 0 24 24"><g stroke="#6868dd"><path d="M12 1l9 4v7q0 7-9 11-9-4-9-11V5z"/></g></svg></button>
      <button aria-label="More tools"><svg viewBox="0 0 24 24"><g stroke="#666"><path d="M2 21L13 9q-1-5 5-7l-2 4 3 3 4-2q-1 5-6 5" stroke-width="3"/><circle cx="18" cy="18" r="4"/></g></svg></button>
      <button class="last" aria-label="Open pane"><svg viewBox="0 0 24 24"><g stroke="#555"><path d="M5 3v18M8 12h14M17 7l5 5-5 5"/></g></svg></button>
    </nav>
  </div>
  <svg class="watermark" viewBox="0 0 700 460" aria-hidden="true"><text x="0" y="0" filter="url(#emboss)" transform="translate(75 405) rotate(-27)">EPCDEPO.COM</text></svg>
</div>
</body>
</html>
```
FILE: styles.css
```
* { box-sizing: border-box; margin: 0; padding: 0; }
body { background: #fff; color: #555; font-family: "Open Sans", "Noto Sans", sans-serif; font-size: 7px; padding-top: 120px; }
button { background: none; border: 0; color: inherit; font: inherit; display: flex; align-items: center; justify-content: center; }
svg { fill: none; stroke: #666; stroke-width: 2; display: block; }
i { display: block; }
ul, ol { list-style: none; }
a { color: inherit; text-decoration: none; }
.defs { position: absolute; width: 0; height: 0; }
.app { position: relative; }

.titlebar { display: flex; align-items: center; height: 13px; padding-left: 4px; gap: 3px; }
.titlebar h1 { font-size: 5px; font-weight: 400; color: #222; }
.pdf { width: 6px; height: 7px; }
.winbtns { margin-left: auto; display: flex; }
.winbtns button { width: 20px; height: 13px; }
.winbtns svg { width: 5px; height: 5px; }
.menubar { display: flex; height: 9px; padding-left: 3px; gap: 6px; font-size: 5px; }
.tabs { display: flex; height: 17px; background: #e8e8e8; border-top: 1px solid #ddd; border-bottom: 1px solid #ddd; }
.home { width: 32px; }
.tools { width: 30px; }
.tab { display: flex; align-items: center; width: 81px; margin-left: 5px; padding: 0 4px 0 29px; justify-content: space-between; background: #fafafa; border-left: 1px solid #ddd; font-size: 6px; }
.tab svg { width: 3px; height: 3px; stroke-width: 3; }
.account { display: flex; margin-left: auto; padding-right: 9px; }
.account button { width: 19px; }
.account svg { width: 10px; height: 10px; }
.account .signin { width: auto; padding-left: 8px; font-weight: 600; }

.toolbar { display: flex; align-items: center; height: 21px; background: #fbfbfb; border-bottom: 1px solid #ddd; padding-left: 1px; }
.group { display: flex; align-items: center; }
.group button { width: 20px; height: 20px; }
.group svg { width: 11px; height: 11px; flex: none; }
.group .dim { stroke: #aaa; }
.g-nav { margin-left: 54px; }
.pageno { width: 14px; height: 12px; margin-left: 4px; border: 0; border-bottom: 1px solid #ddd; background: none; text-align: center; font: 5px "Open Sans", sans-serif; color: #555; }
.total { font-size: 5px; margin-left: 3px; width: 23px; }
.zoom { display: flex; align-items: center; width: 32px; height: 13px; margin: 0 8px 0 4px; border-bottom: 1px solid #ddd; }
.zoom select { appearance: none; border: 0; background: none; font: 5px "Open Sans", sans-serif; color: #777; width: 25px; padding-left: 3px; }
.caret { border: 2px solid transparent; border-top-color: #555; border-bottom: 0; }
.group .fit { gap: 1px; width: 21px; }
.g-edit { border-left: 1px solid #ddd; margin-left: 4px; padding-left: 4px; height: 13px; }
.g-share { margin-left: auto; }

.body { display: flex; align-items: stretch; }
.rail { width: 20px; border-right: 1px solid #ddd; background: #fbfbfb; padding-top: 4px; }
.rail button { width: 19px; height: 21px; }
.rail svg { width: 11px; height: 11px; }
.rail .on svg { stroke: #1b76bd; }
.panel { width: 107px; background: #fbfbfb; padding: 0 5px 0 7px; }
.phead { display: flex; justify-content: space-between; align-items: center; height: 18px; border-bottom: 1px solid #ddd; padding-right: 4px; }
.phead h2 { font-size: 6px; font-weight: 400; }
.phead svg { width: 6px; height: 6px; }
.ptools { display: flex; align-items: center; height: 20px; border-bottom: 1px solid #ddd; gap: 5px; }
.ptools svg { width: 11px; height: 11px; }
.ptools .opts { gap: 2px; padding-right: 4px; border-right: 1px solid #ddd; }
.tree { padding-top: 6px; margin-left: -2px; font-family: Roboto, "Open Sans", sans-serif; font-size: 7px; line-height: 9px; white-space: nowrap; }
.tree ul { padding: 1px 0 0 7px; }
.row { display: flex; gap: 4px; min-height: 14px; padding-bottom: 3px; }
.row svg { flex: none; }
.tw { flex: none; width: 6px; height: 6px; margin-top: 2px; }
.b { width: 5px; height: 8px; margin-right: 1px; }
.b use { fill: #eee; }
.collapse { width: 9px; background: #e8e8e8; border-right: 1px solid #ddd; }
.collapse i { border: 2px solid transparent; border-right: 3px solid #444; border-left: 0; }

.doc { flex: 1; background: #989898; padding: 0 110px; font-family: "Liberation Sans", Arial, sans-serif; color: #222; }
.paper { background: #fff; display: flex; margin-bottom: 3px; padding-bottom: 3px; }
.next { background: #fff; height: 2px; }
.content { flex: 1; padding: 6px 0 0 26px; }
.running { font-size: 7px; line-height: 8px; text-align: center; }
.service { font-size: 6px; line-height: 7px; border-bottom: 2px solid #444; }
.content h3 { font-size: 8px; line-height: 9px; font-weight: 400; margin-bottom: 3px; }
.sub { display: flex; justify-content: space-between; align-items: center; height: 9px; }
.sub h4 { font-size: 7px; font-weight: 400; }
.sub span { font-size: 3px; }
.caption { font-size: 6px; line-height: 8px; text-align: center; margin: 4px 0 1px; }
.diagram { width: 100%; stroke: none; }
.ln { fill: none; stroke: #333; stroke-width: 2; }
.ln .w { fill: #fff; }
.ln .k { fill: #444; }
.ln .core { stroke: #fff; stroke-width: 5; stroke-linejoin: round; }
.ln .dash { stroke: #888; stroke-dasharray: 9 3; }
.marks text { font-size: 3px; font-weight: 700; fill: #111; }
.marks .thin { font-weight: 400; }
.nums circle { fill: #fff; stroke: #777; stroke-width: 1; }
.nums text { font-size: 3px; text-anchor: middle; fill: #222; }
.parts { display: grid; grid-template-columns: repeat(3, 1fr); font-size: 4px; line-height: 7px; padding: 2px 0 0 4px; }
.parts li { display: flex; }
.parts span { width: 9px; }
footer { display: grid; grid-template-columns: 1fr 1fr 1fr; align-items: center; font-size: 4px; line-height: 8px; padding-top: 5px; }
footer strong { font-size: 7px; text-align: center; }
.end { text-align: right; }
.index { width: 26px; padding-top: 22px; margin-left: 1px; font-size: 5px; color: #aaa; }
.index li { height: 20px; line-height: 20px; padding-left: 7px; }
.index .cur { height: 16px; line-height: 16px; margin: 2px 0; padding-left: 3px; background: #000; color: #fff; }

.scroll { width: 8px; background: #f0f0f0; display: flex; justify-content: center; border-top: 4px solid #ddd; }
.scroll i { width: 1px; height: 20px; margin-top: 167px; background: #777; }
.side { width: 18px; background: #fbfbfb; display: flex; flex-direction: column; align-items: center; }
.side button { width: 18px; height: 21px; flex: none; }
.side svg { width: 11px; height: 11px; }
.side .first { border-bottom: 1px solid #ddd; }
.side .last { margin-top: auto; border-top: 1px solid #ddd; }
.watermark { position: absolute; inset: 0; width: 100%; height: 100%; pointer-events: none; stroke: none; }
.watermark text { font: 700 90px "Open Sans", sans-serif; fill: #000; }
```
